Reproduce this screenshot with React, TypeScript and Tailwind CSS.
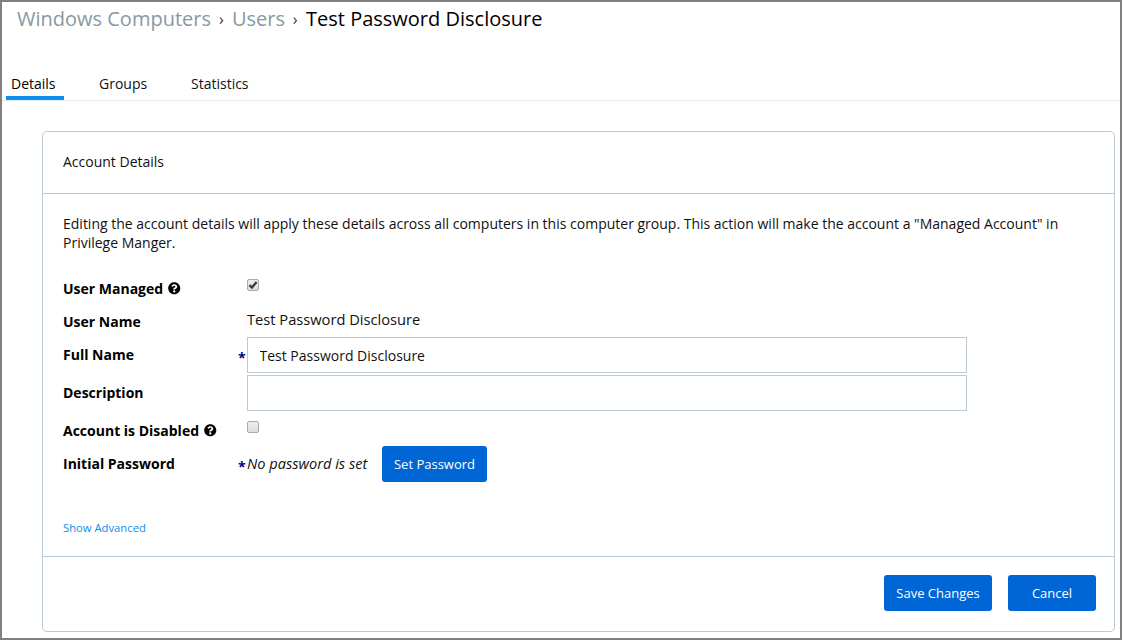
import { useState, type ReactNode } from "react";
import { FaQuestionCircle } from "react-icons/fa";

function Help() {
  return <FaQuestionCircle className="mt-px ml-[5px] size-[12.5px] text-black" />;
}

function Row({ label, help, required, height, children }: {
  label: string;
  help?: boolean;
  required?: boolean;
  height: string;
  children: ReactNode;
}) {
  return (
    <div className={`flex ${height}`}>
      <div className="flex h-[34px] w-[174px] shrink-0 items-center text-[14px] font-bold whitespace-nowrap text-black">
        <span>{label}</span>
        {help && <Help />}
      </div>
      <div className="flex h-9 w-[10px] shrink-0 items-center pl-px text-[14px] font-bold text-[#00008b]">
        {required && <span className="pt-1">*</span>}
      </div>
      {children}
    </div>
  );
}

function Check({ initial, label }: { initial: boolean; label: string }) {
  const [on, setOn] = useState(initial);
  return (
    <button
      role="checkbox"
      aria-checked={on}
      aria-label={label}
      onClick={() => setOn(!on)}
      className="mt-2 flex size-3 items-center justify-center rounded-[2px] border border-[#a9a9a9] bg-linear-to-b from-[#eeeeee] to-[#dcdcdc]"
    >
      {on && (
        <svg viewBox="0 0 10 10" className="size-[10px] shrink-0">
          <path d="M1.4 5.2 L3.9 7.5 L8.6 1.9" fill="none" stroke="#3c3c3c" strokeWidth="2.3" />
        </svg>
      )}
    </button>
  );
}

const button = "h-9 rounded-[3px] bg-[#0066d6] pt-px text-[13px] text-white whitespace-nowrap";
const input = "h-9 w-[720px] border border-[#bccad6] bg-white pr-3 pl-[11.5px] pt-px text-[14px] outline-none";

export default function App() {
  return (
    <div className="h-[640px] w-[1122px] overflow-hidden border-2 border-[#808080] bg-white font-['Open_Sans','Noto_Sans',sans-serif] text-[14px] text-[#111111]">
      <nav className="flex h-[34px] items-center pl-[15px] text-[20px] whitespace-nowrap text-[#8799a3]">
        <span>Windows Computers</span>
        <span className="w-[21px] text-center text-[16px] text-[#333333]">›</span>
        <span>Users</span>
        <span className="w-[21px] pr-px text-center text-[16px] text-[#333333]">›</span>
        <span className="text-black">Test Password Disclosure</span>
      </nav>

      <div className="mt-8 flex h-[33px] gap-[25px] border-b border-[#e3ebf2] pl-1 leading-8">
        <div className="h-8 w-[58px] border-b-4 border-[#0a8fee] pl-[5px] text-black">Details</div>
        <div className="w-[67px] pl-[10px]">Groups</div>
        <div className="w-[70px] pl-[10px]">Statistics</div>
      </div>

      <section className="mt-[30px] ml-10 flex h-[501px] w-[1073px] flex-col rounded-[5px] border border-[#bccad6]">
        <h2 className="flex h-[62px] items-center border-b border-[#bccad6] pb-0.5 pl-5">Account Details</h2>
        <div className="h-[362px] pt-5 pl-5">
          <p className="w-[1010px] leading-[19px]">
            Editing the account details will apply these details across all computers in this computer group. This action will make the account a "Managed Account" in Privilege Manger.
          </p>
          <div className="mt-[19px]">
            <Row label="User Managed" help height="h-[33px]"><Check initial={true} label="User Managed" /></Row>
            <Row label="User Name" height="h-[33px]"><span className="text-[14.67px] leading-[30px]">Test Password Disclosure</span></Row>
            <Row label="Full Name" required height="h-[38px]">
              <input aria-label="Full Name" defaultValue="Test Password Disclosure" className={input} />
            </Row>
            <Row label="Description" height="h-[38px]">
              <input aria-label="Description" className={input} />
            </Row>
            <Row label="Account is Disabled" help height="h-[33px]"><Check initial={false} label="Account is Disabled" /></Row>
            <Row label="Initial Password" required height="h-9">
              <span className="w-[135px] text-[14.6px] leading-[34px] italic">No password is set</span>
              <button className={`${button} w-[105px]`}>Set Password</button>
            </Row>
          </div>
          <a className="mt-9 block text-[11.25px] leading-5 text-[#0a8fee]">Show Advanced</a>
        </div>
        <footer className="flex grow justify-end gap-4 border-t border-[#bccad6] pt-[18px] pr-[18px]">
          <button className={`${button} w-[108px]`}>Save Changes</button>
          <button className={`${button} w-[88px]`}>Cancel</button>
        </footer>
      </section>
    </div>
  );
}
